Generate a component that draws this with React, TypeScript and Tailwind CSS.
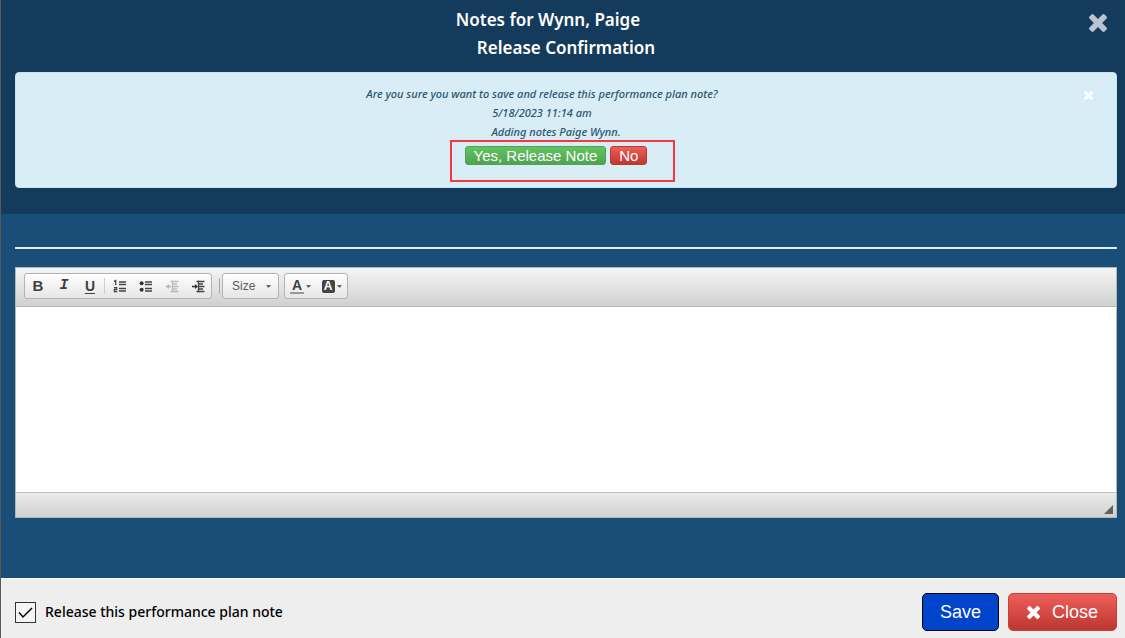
import { useState } from "react";
import type { ReactNode } from "react";

const TimesIcon = ({ className }: { className: string }) => (
  <svg
    viewBox="302 366 1188 1188"
    fill="currentColor"
    className={className}
    aria-hidden="true"
  >
    <path d="M1490 1322q0 40-28 68l-136 136q-28 28-68 28t-68-28l-294-294-294 294q-28 28-68 28t-68-28l-136-136q-28-28-28-68t28-68l294-294-294-294q-28-28-28-68t28-68l136-136q28-28 68-28t68 28l294 294 294-294q28-28 68-28t68 28l136 136q28 28 28 68t-28 68l-294 294 294 294q28 28 28 68z" />
  </svg>
);

const Caret = ({ className = "" }: { className?: string }) => (
  <svg
    viewBox="0 0 6 3"
    className={`h-[3px] w-[5px] fill-[#474747] ${className}`}
    aria-hidden="true"
  >
    <path d="M0 0h6L3 3z" />
  </svg>
);

const NumberedListIcon = () => (
  <svg viewBox="0 0 16 16" className="size-4" aria-hidden="true">
    <path
      d="M7 4h7M7 6.500h7M7 10.500h7M7 13h7"
      stroke="#444"
      strokeWidth="1.4"
      fill="none"
    />
    <path
      d="M2 3.400l1.700-.900V7M2 9.600h2.700v1.900H2.400v2.100h2.900"
      stroke="#444"
      strokeWidth="1.3"
      fill="none"
    />
  </svg>
);

const BulletedListIcon = () => (
  <svg viewBox="0 0 16 16" className="size-4" aria-hidden="true">
    <path
      d="M7 4h7M7 6.500h7M7 10.500h7M7 13h7"
      stroke="#444"
      strokeWidth="1.4"
      fill="none"
    />
    <circle cx="3.6" cy="5.2" r="2" fill="#333" />
    <circle cx="3.6" cy="11.7" r="2" fill="#333" />
  </svg>
);

const IndentIcon = ({ outdent = false }: { outdent?: boolean }) => (
  <svg viewBox="0 0 16 16" className="size-4" aria-hidden="true">
    <path
      d="M8.500 2.500v12M6.500 3.500h8M9 6h4M9 8.500h5.500M9 11h4M6.500 13.500h8"
      stroke="#444"
      strokeWidth="1.3"
      fill="none"
    />
    <path d="M2 8.500h5" stroke="#333" strokeWidth="1.6" />
    <path
      d={outdent ? "M5 6v5L2 8.500z" : "M5 6v5l3-2.500z"}
      fill="#333"
    />
  </svg>
);

const ToolButton = ({
  label,
  disabled,
  wide,
  children,
}: {
  label: string;
  disabled?: boolean;
  wide?: boolean;
  children: ReactNode;
}) => (
  <button
    type="button"
    aria-label={label}
    disabled={disabled}
    className={`flex h-6 items-center justify-center leading-4 text-[#404040] disabled:opacity-30 ${
      wide ? "w-[31px] gap-[2px]" : "w-[26px]"
    }`}
  >
    {children}
  </button>
);

const groupClass =
  "flex h-[26px] items-center rounded-[3px] border border-[#b3b3b3] bg-linear-to-b from-white to-[#e6e6e6]";

const Toolbar = () => (
  <div className="flex h-[39px] items-center border-b border-[#b6b6b6] bg-linear-to-b from-[#f5f5f5] to-[#cfd1cf] px-2 pb-[2px]">
    <div className={groupClass}>
      <ToolButton label="Bold">
        <b className="text-[15px]">B</b>
      </ToolButton>
      <ToolButton label="Italic">
        <b className="font-['Liberation_Mono',monospace] text-[15px] italic">
          I
        </b>
      </ToolButton>
      <ToolButton label="Underline">
        <b className="text-sm underline underline-offset-2">U</b>
      </ToolButton>
      <span className="ml-px mr-[2px] h-4 w-px bg-[#cfcfcf]" />
      <ToolButton label="Numbered list">
        <NumberedListIcon />
      </ToolButton>
      <ToolButton label="Bulleted list">
        <BulletedListIcon />
      </ToolButton>
      <ToolButton label="Decrease indent" disabled>
        <IndentIcon outdent />
      </ToolButton>
      <ToolButton label="Increase indent">
        <IndentIcon />
      </ToolButton>
    </div>
    <span className="ml-[7px] mr-[2px] h-4 w-px bg-[#a6a6a6]" />
    <div className={`relative w-[57px] ${groupClass}`}>
      <select
        aria-label="Size"
        className="h-6 w-full appearance-none pl-[9px] text-xs text-[#5a5a5a]"
      >
        <option>Size</option>
      </select>
      <Caret className="pointer-events-none absolute right-[7px]" />
    </div>
    <div className={`ml-[5px] ${groupClass}`}>
      <ToolButton label="Text color" wide>
        <b className="border-b-2 border-[#9a9a9a] px-[2px] text-sm leading-[14px]">
          A
        </b>
        <Caret />
      </ToolButton>
      <ToolButton label="Background color" wide>
        <b className="flex h-[13px] w-[13px] items-center justify-center rounded-[2px] bg-[#444] text-xs text-white">
          A
        </b>
        <Caret />
      </ToolButton>
    </div>
  </div>
);

const App = () => {
  const [release, setRelease] = useState(true);
  const [note, setNote] = useState("");

  return (
    <div className="flex min-h-screen flex-col border-l border-[#5c5856] bg-[#184e77] font-['Liberation_Sans',Arial,sans-serif]">
      <header className="relative bg-[#143a5c] px-2 pb-[26px] pl-[14px] pt-[6px]">
        <div className="text-center font-['Noto_Sans',sans-serif] text-[17px] font-semibold leading-7 text-white">
          <h1 className="pr-9">Notes for Wynn, Paige</h1>
          <h2>Release Confirmation</h2>
        </div>
        <button
          type="button"
          aria-label="Close dialog"
          className="absolute right-[18px] top-[14px] text-[#b9c4ce]"
        >
          <TimesIcon className="size-[18px]" />
        </button>

        <div className="relative mt-[10px] flex h-[116px] flex-col items-center rounded-[4px] border border-[#bce8f1] bg-[#d9edf7] pt-[11px]">
          <div className="flex flex-col items-center font-['Noto_Sans',sans-serif] text-[11px] font-medium italic leading-[19px] text-[#2c566f]">
            <p className="pr-12">
              Are you sure you want to save and release this performance plan
              note?
            </p>
            <p className="pr-12">5/18/2023 11:14 am</p>
            <p className="pr-5">Adding notes Paige Wynn.</p>
          </div>
          <div className="relative mr-5 mt-[5px] flex gap-1 text-[15px] leading-[17px] text-white">
            <button
              type="button"
              className="rounded-[3px] border border-[#51a351] bg-linear-to-b from-[#62c462] to-[#51a351] px-2"
            >
              Yes, Release Note
            </button>
            <button
              type="button"
              className="rounded-[3px] border border-[#bd362f] bg-linear-to-b from-[#ee5f5b] to-[#bd362f] px-2"
            >
              No
            </button>
            <div className="pointer-events-none absolute -left-[15px] -top-[6px] h-[42px] w-[225px] border-2 border-[#f4393c]" />
          </div>
          <button
            type="button"
            aria-label="Dismiss"
            className="absolute right-[23px] top-[18px] text-white"
          >
            <TimesIcon className="size-[9px]" />
          </button>
        </div>
      </header>

      <main className="flex-1 pb-[60px] pl-[14px] pr-2 pt-[33px]">
        <hr className="border-t-2 border-[#e4ebf0]" />
        <div className="mt-[18px] border border-[#b6b6b6]">
          <Toolbar />
          <textarea
            aria-label="Note"
            value={note}
            onChange={(e) => setNote(e.target.value)}
            className="block h-[185px] w-full resize-none bg-white p-3 text-sm outline-none"
          />
          <div className="flex h-[25px] items-end justify-end border-t border-[#bfbfbf] bg-linear-to-b from-[#ebebeb] to-[#cfd1cf] p-[3px]">
            <svg
              viewBox="0 0 9 9"
              className="size-[9px] fill-[#606060]"
              aria-hidden="true"
            >
              <path d="M9 0v9H0z" />
            </svg>
          </div>
        </div>
      </main>

      <footer className="flex items-center justify-between border-t border-white bg-[#eee] pb-[7px] pl-[14px] pr-2 pt-[14px]">
        <label className="flex items-center gap-[9px] font-['Noto_Sans',sans-serif] text-sm font-medium text-black">
          <span className="relative size-[21px]">
            <input
              type="checkbox"
              checked={release}
              onChange={(e) => setRelease(e.target.checked)}
              className="peer block size-[21px] appearance-none border border-[#333] bg-[#f4f4f4]"
            />
            <svg
              viewBox="0 0 21 21"
              className="pointer-events-none invisible absolute inset-0 fill-none stroke-black stroke-[1.5] peer-checked:visible"
              aria-hidden="true"
            >
              <path d="M4 10.500l4 4.500 9-9" />
            </svg>
          </span>
          Release this performance plan note
        </label>
        <div className="flex gap-[9px] text-lg text-white">
          <button
            type="button"
            className="h-[38px] rounded-[5px] border border-black bg-[#04c] px-[17px]"
          >
            Save
          </button>
          <button
            type="button"
            className="flex h-[38px] items-center gap-3 rounded-[5px] border border-[#c9403c] bg-linear-to-b from-[#ee5f5b] to-[#bd362f] px-[18px]"
          >
            <TimesIcon className="size-[13px]" />
            Close
          </button>
        </div>
      </footer>
    </div>
  );
};

export default App;
